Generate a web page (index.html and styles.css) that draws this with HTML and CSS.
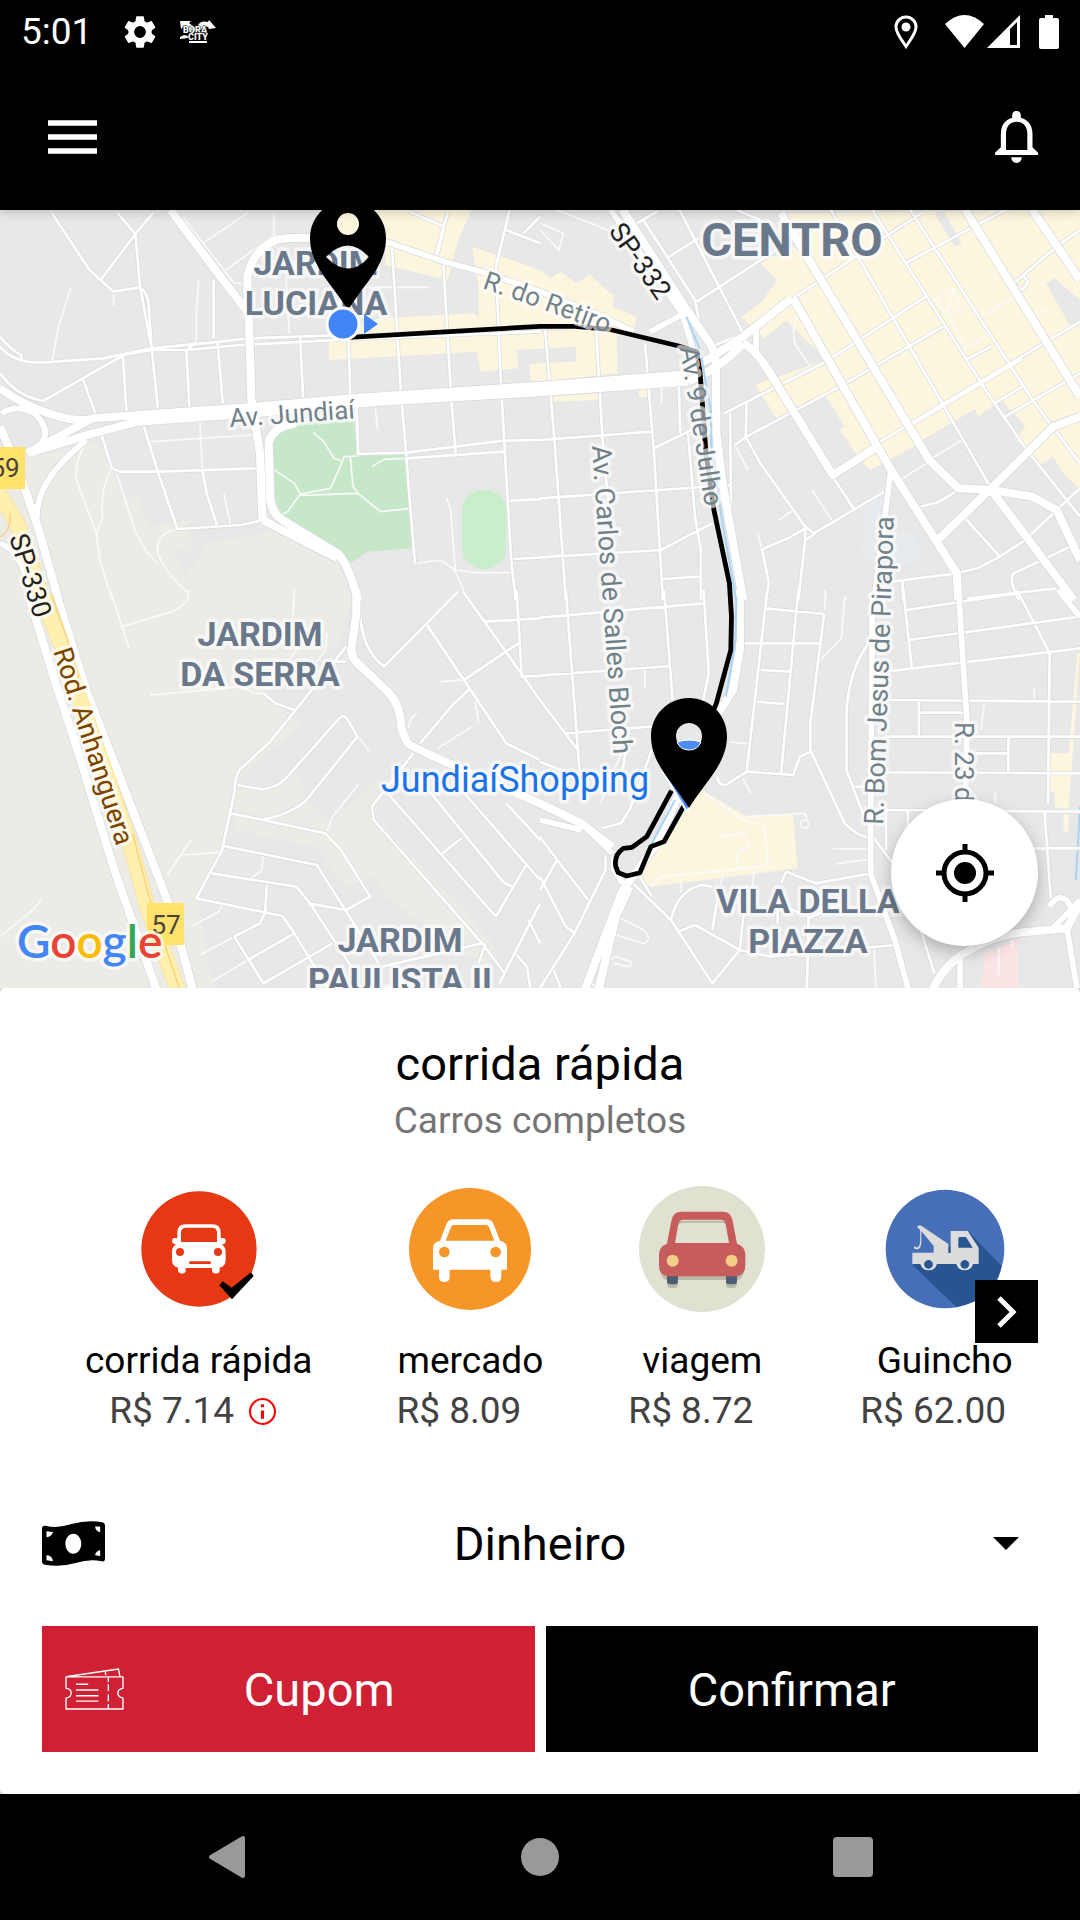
FILE: index.html
```html
<!DOCTYPE html>
<html lang="pt-BR">
<head>
<meta charset="utf-8">
<meta name="viewport" content="width=device-width, initial-scale=1">
<title>Bora City</title>
<link rel="stylesheet" href="styles.css">
</head>
<body>
<div class="app">
  <header class="header">
    <div class="status">
      <span class="clock">5:01</span>
      <svg class="gear" width="32" height="34" viewBox="2.2 2 19.6 20"><path fill="#fff" d="M19.14 12.94c.04-.3.06-.61.06-.94s-.02-.64-.07-.94l2.03-1.58a.5.5 0 0 0 .12-.61l-1.92-3.32a.49.49 0 0 0-.59-.22l-2.39.96a7 7 0 0 0-1.62-.94l-.36-2.54a.48.48 0 0 0-.48-.41h-3.84a.47.47 0 0 0-.47.41l-.36 2.54c-.59.24-1.13.57-1.62.94l-2.39-.96a.48.48 0 0 0-.59.22L2.74 8.87a.47.47 0 0 0 .12.61l2.03 1.58a7 7 0 0 0 0 1.88l-2.03 1.58a.5.5 0 0 0-.12.61l1.92 3.32c.12.22.37.29.59.22l2.39-.96c.5.38 1.03.7 1.62.94l.36 2.54c.05.24.24.41.48.41h3.84c.24 0 .44-.17.47-.41l.36-2.54a6.600 6.600 0 0 0 1.62-.94l2.39.96c.22.08.47 0 .59-.22l1.92-3.32a.47.47 0 0 0-.12-.61zM12 15.600a3.600 3.600 0 1 1 0-7.200 3.600 3.600 0 0 1 0 7.200z"/></svg>
      <svg class="brand" width="36" height="24" viewBox="0 0 36 24"><path fill="#fff" d="M0 1l11 0-2 2 10 7-1-5q3-5 10-3l1-2 7 8-7 1-1-2q-5-2-7 3l-12 1L4 6l-3 3zM0 17l4-2 4 1v2l-8 1zM9 21h18v2H9z"/><text x="3" y="13" class="brand-text">BORA</text><text x="8" y="20" class="brand-text">CITY</text></svg>
      <span class="spacer"></span>
      <svg class="loc" width="24" height="34" viewBox="0 0 24 34"><path fill="none" stroke="#fff" stroke-width="3" d="M12 31.500C7 24 2 18 2 12a10 10 0 0 1 20 0c0 6-5 12-10 19.500z"/><circle cx="12" cy="12" r="4.500" fill="#fff"/></svg>
      <svg class="wifi" width="39" height="34" viewBox="0 0 39 34"><path fill="#fff" d="M0 9Q19.500-9 39 9L19.500 33z"/></svg>
      <svg class="signal" width="33" height="34" viewBox="0 0 33 34"><path fill="#fff" fill-rule="evenodd" d="M33 0v33H0zM23 14v16h7V7z"/></svg>
      <svg class="battery" width="20" height="34" viewBox="0 0 20 34"><path fill="#fff" d="M6 0h8v3h4q2 0 2 2v27q0 2-2 2H2q-2 0-2-2V5q0-2 2-2h4z"/></svg>
    </div>
    <div class="toolbar">
      <button class="bare" aria-label="Menu"><svg width="49" height="34" viewBox="0 0 49 34"><path stroke="#fff" stroke-width="5.500" d="M0 3h49M0 17h49M0 31h49"/></svg></button>
      <button class="bare" aria-label="Notificações"><svg width="43" height="52" viewBox="1321 333 125 156" preserveAspectRatio="none"><path fill="#fff" fill-rule="evenodd" d="M1371 353v-8a12 12 0 0 1 25 0v8q34 10 34 50v39l16 16v7h-125v-7l17-16v-39q0-40 33-50zM1353 450h62v-47q0-36-31-38-31 2-31 38zM1368 472h31q-2 17-15 17-14 0-16-17z"/></svg></button>
    </div>
  </header>

  <main class="main">
    <section class="map" aria-label="Mapa">
      <svg class="map-canvas" viewBox="0 210 1080 778" preserveAspectRatio="xMidYMid slice">
        <defs>
          <g id="thin">
            <path d="M205 265L170 380 152 480M577 240L570 340 570 420M795 38V105L650 215M720 38L590 130M530 50L680 250H720M910 697L940 725 970 775 990 782M790 805L855 850 872 882 960 865 1000 770 1040 768M872 882L835 935 815 945M872 886L1040 880 1105 935 1190 925M1017 770L1025 860 1040 880M1080 800L1115 778 1180 775M250 725Q210 800 225 850L280 1000 290 1080 325 1200M515 987Q450 1000 458 1060 480 1120 548 1180M340 825L395 1000Q430 1070 458 1090M325 805Q290 860 298 950L280 1000M580 660L588 810M435 725L740 705M460 820L590 810M1297 895L1308 925 1322 1110M1205 1090L1280 1080 1320 1110 1380 1118H1495M1320 1110L1350 1180M1020 262L1245 262M830 230L840 400M330 275V318M650 880L670 975M1090 625L1097 692"/>
            <g transform="translate(1568)"><path d="M565 735L605 810M790 870L850 965M745 350Q730 390 740 430L790 510M1130 780L1225 720M1030 850L1130 785M1145 300L1200 265 1222 325 1185 345zM1185 345L1235 445 1300 405M1280 350L1380 290M1435 350L1480 320M1200 265L1180 345M632 1000L645 1050M695 960L735 930M0 90L55 150 68 100 0 70M50 30L210 95M353 550V612M830 1180V1200M888 1190V1200"/></g>
            <g transform="translate(0 1170)"><path d="M435 305L440 315 700 290 740 310 765 310M320 0L375 175M355 110L500 65Q560 35 545 0M855 0L850 80M485 855L555 750M525 795L640 787M0 1040L95 960 120 930M1040 585L965 680 950 725M580 1095L680 1040M615 1175L720 1110M765 795L760 840 730 865M1270 475L1370 410M1280 275L1355 268M1375 300L1390 400M555 1010L635 965 650 940M865 175L835 215M950 130L945 180 920 215M1038 440L1078 488M1185 415L1195 385 1210 368"/></g>
            <g transform="translate(1568 1170)"><path d="M885 20L875 145 810 215M828 0V60M850 777H955M857 822L955 808M320 890L350 860 640 830Q665 825 662 800L650 705 590 690 480 610M520 740L590 730 607 770 573 790V835M600 680L770 670 775 690M235 985L300 1020Q330 1050 300 1060L220 1035M410 860V910M530 850L525 885M622 845L617 885M305 235V295M1290 340L1280 420M1435 290V330M590 565L612 610M200 1110L220 1100 265 1115 260 1130 215 1120M1322 610V640M970 1075L975 1194M550 455L605 462M1370 1050V1075M1332 1070V1155M240 480L175 640"/><circle cx="768" cy="702" r="12"/></g>
          </g>
          <g id="minor">
            <path d="M0 440Q40 490 120 488L300 475 440 445 640 425 720 415 1000 405M0 410Q30 450 62 465V480M0 520Q50 590 125 603L240 535 360 465 440 450 545 450 700 435 1010 418 1568 395M150 38L260 210 330 275 405 262Q430 275 432 320L440 440 458 625M445 38L393 102 340 38M393 102L290 243M393 102L407 262 437 430M240 535L277 640M357 470L367 632M541 450L551 640M632 430L647 610M545 450L570 425M620 240V415M872 415L880 595M1012 415L1017 590M1138 140L1165 590 1180 770M1287 185L1310 590 1323 760M1440 200L1455 560 1465 740 1485 1090 1498 1200M1480 30L1440 200M1300 38L1265 165M1190 35L1290 80 1270 165M1568 50L1520 100M1470 90L1568 130M1035 600L1040 762 1180 758 1465 722 1568 720M1180 775L1465 755M1180 775L1205 1090M418 680L430 720 460 820 515 987 700 975 765 960M295 705L325 805 350 815H460L745 805M588 810L600 880 630 975M1480 902L1568 898M1490 1077L1568 1073"/>
            <g transform="translate(1568)"><path d="M845 30L1310 865M965 30L1300 580 1410 745 1568 950M1075 30L1430 600 1568 790M735 295L1010 105 1110 38M1060 190L1350 30M535 640L830 485 1120 290M600 710L870 560 1170 380M980 730L1350 500 1568 365M1070 680L1290 545 1400 478M1235 480L1310 440M1350 650L1568 520M1320 610L1400 560M1375 250L1500 140 1568 90M1375 250L1400 270 1418 245 1405 230M405 30L590 400M300 60L450 300 470 410M455 305L700 140M375 170L460 115M280 70L340 35M510 435L590 400M0 720L325 695M0 895L555 855M0 1072L350 1050 500 970M330 745L440 690M357 1137L465 1130M15 390L42 720 75 1200M163 390L183 740 200 930M305 430L330 745 357 1200M403 550L407 700M430 700L450 950 467 1050V1200M552 640L555 980M565 735L600 710M600 610L597 710 640 790 770 980 795 1000 1000 875M640 1050L720 1015 770 985M770 985V1020L750 1200M770 1020L800 1000M645 1050L665 1150 655 1200M850 830L910 925M1105 920L1160 905 1215 870M1235 955L1335 1070 1410 1020 1500 930 1568 865M1020 1145L1210 1120 1270 1105 1335 1070M1052 1145L1055 1200M1540 1040L1375 1120Q1360 1140 1390 1200M1240 1195L1500 1165M570 30L640 60"/></g>
            <g transform="translate(0 1170)"><path d="M690 585L760 598Q800 595 830 565L985 385Q1000 370 1010 390L1038 440 890 630Q860 660 800 680L760 690M975 215H1005M1005 170L855 365 780 460 695 540Q680 570 682 600L645 780 570 925M670 670L945 730 990 780 1075 920 1005 960 895 940M650 768L920 825 1100 1120M615 850L860 890 900 940 1020 1130M570 925L820 978 855 1030 950 1194M775 885L770 965 755 1000 680 1040 765 1180 965 1060M720 1110L855 1030M765 310L800 340 855 360M1045 65Q1050 180 1115 230L1330 5M1240 105L1470 460 1568 510M1345 5L1568 330M1220 460L1310 350 1365 295M1350 268L1505 160M1410 95L1568 85M1500 0L1515 260 1568 258M1200 490L1110 610 1080 650 1085 690 1400 1060 1465 1150M1130 615L1440 980M1200 545L1465 880 1490 890M1285 790L1340 745M1340 600L1568 870M1470 640L1568 750M1530 820L1440 980M1568 940L1450 1180M1535 990L1568 1060M1410 1060L1390 1120M1500 1095L1530 1130 1540 1194M1110 1130L1400 1060"/></g>
            <g transform="translate(1568 1170)"><path d="M75 0L110 480 115 540M360 0L385 330M475 0L490 250 470 350M0 83L475 40M0 257L380 228M70 430L380 405M0 330L110 480M0 515L60 540M325 480L260 660 235 700 180 715M250 480L240 540M660 0L600 545 540 585Q515 585 515 560M750 0L700 550M825 70L785 400V480L885 700Q920 740 968 745M655 55L825 72M590 160H640L810 160M640 240L725 245M630 335L710 342M600 545L735 555 755 500 785 485M955 160Q900 230 890 360V540L930 650 965 740M915 590H960M1055 0L1080 240M1065 60L1385 10M1070 150L1568 80M1005 245L1568 175M1385 0L1480 190 1475 640M1000 330L1568 335M1000 440H1568M1000 547L1568 550M1000 660L1568 665M1100 335V435M1100 368H1240M1360 440V545M1265 490H1360M1005 665V780M1068 660V720M1465 665L1485 950M1430 775H1568M970 745L1060 870 1145 1150M270 880L380 990 500 1180 580 1080 600 885M380 990Q400 900 470 885L500 890M700 880L715 845 800 880 960 850M400 1025L450 1005 580 1080 670 1100 1030 1065M500 1020L520 900M780 980L775 1194M780 980L690 940V1000M780 985L880 940M0 740L50 810 140 930M190 800V840L100 1030 0 1194M50 810L0 900M100 1030L75 1010 0 860M40 1140L60 1194M140 1175L170 1194M150 710L190 780M290 860L325 920"/></g>
          </g>
          <g id="medium">
            <path d="M250 720Q120 830 110 920L105 960M5 640Q50 610 100 640 150 690 120 730L80 760M1120 125L1290 185 1400 215 1568 275 1728 340 1840 395M0 1030Q60 1050 90 1180"/>
            <g transform="translate(1568)"><path d="M1020 800L1000 960 970 1200M320 395L410 345M1155 1020L1310 865M628 380V470M205 30L415 345 450 470 460 500"/></g>
            <g transform="translate(1568 1170)"><path d="M965 10L960 700V850L1030 1050 1070 1200M1215 0L1240 400 1235 640M1220 1090V1200M1530 1015L1560 1200M1568 930L1480 1025M1480 950Q1500 910 1530 930L1550 970M1505 0L1568 80M120 700L210 790M215 800V840L240 880M0 690L120 720"/></g>
          </g>
          <g id="major">
            <path d="M495 30L640 230 722 340 730 600 755 760 762 960M722 340L718 230Q735 150 800 120 850 110 920 115L1120 120M0 565Q60 610 140 640T270 655L740 620 1020 595 1568 557 1968 525M80 760L270 700 400 665 740 640 1100 605 1568 577 1998 545M80 760L260 660M0 680L50 800 110 980 170 1200M860 670Q790 680 780 730L785 900Q790 940 820 960L980 1060Q1010 1090 1040 1200M765 960L790 975 980 1075"/>
            <g transform="translate(1568)"><path d="M240 30L420 320 500 440 510 480 512 700 530 850 590 1200M700 40L1060 660 1130 780 1215 865 1310 870 1430 890 1500 930 1568 1080M735 295L980 740 1020 810 1210 1120 1215 1200M1235 30L1568 590M1430 30L1568 240M730 295L590 410 500 470 400 530M430 545Q530 500 590 430M590 430Q630 450 680 540L850 825 980 740M1568 650L1490 680 1310 865 1155 1020M1310 870L1550 1200"/></g>
            <g transform="translate(0 1170)"><path d="M1035 10V70L1020 180Q1020 210 1060 240L1130 310Q1160 340 1165 410 1175 450 1190 465L1260 500 1568 640 1688 700 1778 770M160 0L175 50 250 300 400 700 500 970 560 1200M78 0L168 300 225 480 335 850 455 1200"/></g>
            <g transform="translate(1568 1170)"><path d="M580 0V180L560 300 500 400 400 620 340 760 240 900 130 1200M260 890L220 980 170 1200M1140 1200Q1170 1130 1230 1090 1330 1030 1420 1025L1530 1015 1568 940"/></g>
          </g>
          <path id="retiro" d="M482 288Q540 308 612 335"/>
        </defs>
        <rect y="210" width="1080" height="778" fill="#e8e8e8"/>
        <g class="ground" transform="translate(0 200) scale(.34439 .33333)">
          <path fill="#ecebe6" d="M0 860L80 775 250 730 290 730 330 820 350 900 400 880 430 980 550 960 560 1060 500 1040 540 1130 600 1030 770 1000 820 960 980 1080 1020 1200 985 1330 760 1480 880 1570 790 1650 700 1730 650 1950 570 2080 620 2364H0zM690 1740L780 1770 860 1700 890 1800 960 1870 1100 1730 1090 1850 1450 2250 1400 2300 1120 2090 1090 2030 1000 2060 920 1940 680 1890z"/>
          <path class="shop" d="M905 38L1000 30H1370L1330 120 1300 240 1120 195V110L1060 30zM1370 140L1568 210 1598 235 1628 215 1673 250 1713 225 1783 290 1778 320 1848 350 1838 410 1568 380 1390 385V260zM1100 355L1380 340 1420 400H1000zM955 420L1790 385 1793 520 1568 545 1540 540 1538 495 1568 490 1673 485V440L1500 450 1505 505 1395 515 1385 455 955 480zM1606 590L1735 580V600L1606 605zM1855 565H1880V590H1855z"/>
          <g transform="translate(1568)"><path class="shop" d="M700 40L1568 30V870L1520 820 1490 770 1450 795 1380 715 1410 680 1340 600 1270 650 1265 625 1200 665 1110 720 1085 740 960 810 930 780 870 690 885 680 830 590 780 600 690 660 625 555 830 480 715 360 650 415 585 350 640 310 690 240 640 190 760 130z"/><path fill="#e8e8e8" d="M1145 40L1170 30 1225 130 1205 140zM640 430L720 395 760 450 680 510zM1470 250L1495 235 1568 300V370L1540 380z"/><path fill="#e7ebee" d="M950 890L1000 860V1000L1090 995 1102 1085 1040 1100 930 1070z"/></g>
          <g transform="translate(1568 1170)"><path class="shop" d="M470 600L600 680 735 672 748 835 320 890 290 865 400 670zM1560 190H1568L1535 655H1495V605H1475V490H1535zM1520 670H1535V725H1520z"/><path fill="#fce4e4" d="M1290 1090L1388 1050V1200H1280z"/><path class="river" d="M1568 650L1556 870"/></g>
          <path fill="#c6e7c8" d="M790 700L860 670 1025 660 1040 760 1180 765 1195 1045 1065 1055 1020 1088 820 950 800 900z"/>
          <rect x="1342" y="870" width="127" height="236" rx="60" fill="#caedcb"/>
          <use href="#thin" class="thin"/>
          <use href="#minor" class="minor-case"/><use href="#minor" class="minor"/>
          <use href="#medium" class="medium-case"/><use href="#major" class="major-case"/>
          <use href="#medium" class="medium"/><use href="#major" class="major"/>
          <path class="highway-case" d="M-10 870L50 970 105 1140 190 1370 280 1640 380 1940 430 2130 520 2380"/>
          <path class="highway" d="M-10 870L50 970 105 1140 190 1370 280 1640 380 1940 430 2130 520 2380"/>
          <path class="highway-line" d="M385 1900L430 2080 520 2364M150 1180L200 1330 240 1480M0 1010Q30 1000 30 940"/>
          <path class="river" d="M1993 350L2033 450 2048 540 2065 640V740L2098 970 2138 1200 2136 1320 2108 1490M1960 1800L1888 1940"/>
          <path class="route" d="M1015 412L1568 379H1670L1768 388 1968 437 2023 455 2033 520 2050 760 2073 930 2118 1150 2124 1250 2122 1350 2080 1510 2060 1560M1950 1772L1878 1910 1835 1942 1810 1945Q1782 1965 1788 2000L1795 2018 1820 2028 1858 2018 1890 1940 1928 1925 1990 1810"/>
        </g>
        <g class="area">
          <text x="316" y="275">JARDIM</text><text x="316" y="315">LUCIANA</text>
          <text x="260" y="646">JARDIM</text><text x="260" y="686">DA SERRA</text>
          <text x="400" y="952">JARDIM</text><text x="400" y="992">PAULISTA II</text>
          <text x="808" y="913">VILA DELLA</text><text x="808" y="953">PIAZZA</text>
          <text x="792" y="256" class="city">CENTRO</text>
        </g>
        <g class="street">
          <text transform="translate(230 427) rotate(-4)">Av. Jundiaí</text>
          <text><textPath href="#retiro">R. do Retiro</textPath></text>
          <text transform="translate(680 348) rotate(81)">Av. 9 de Julho</text>
          <text transform="translate(592 446) rotate(86)" class="long">Av. Carlos de Salles Bloch</text>
          <text transform="translate(883 825) rotate(-88)" class="long">R. Bom Jesus de Pirapora</text>
          <text transform="translate(955 722) rotate(90)">R. 23 d</text>
        </g>
        <g class="road-name">
          <text transform="translate(608 231) rotate(55)">SP-332</text>
          <text transform="translate(9 537) rotate(73)">SP-330</text>
          <text transform="translate(53 651) rotate(72)" class="rodovia">Rod. Anhanguera</text>
        </g>
        <path fill="#ffe16b" d="M0 447h25v42H0zM147 903h37v42h-37z"/>
        <g class="shield"><text x="5" y="477">59</text><text x="166" y="934">57</text></g>
        <text x="381" y="792" class="poi">JundiaíShopping</text>
        <text x="17" y="958" class="google"><tspan fill="#4285f4">G</tspan><tspan fill="#ea4335">o</tspan><tspan fill="#fbbc05">o</tspan><tspan fill="#4285f4">g</tspan><tspan fill="#34a853">l</tspan><tspan fill="#ea4335">e</tspan></text>
        <path fill="#4e8cf5" stroke="#fff" stroke-width="2" d="M662 770L687 812 692 800 675 742z"/>
        <path fill-rule="evenodd" d="M689 698c-21 0-38 17-38 38 0 28 22 46 38 72 16-26 38-44 38-72 0-21-17-38-38-38zM689 723a13 13 0 1 1 0 26 13 13 0 0 1 0-26z"/>
        <path fill="#4e8cf5" stroke="#fff" d="M677 742q12-4 24 0a13 13 0 0 1-24 0z"/>
        <circle cx="348" cy="224" r="12" fill="#fdf6df"/>
        <path fill-rule="evenodd" d="M348 200c-21 0-38 17-38 38 0 28 22 46 38 72 16-26 38-44 38-72 0-21-17-38-38-38zM348 213a11 11 0 1 1 0 22 11 11 0 0 1 0-22zM326 257q22-23 43 0-20 23-43 0z"/>
        <circle cx="343" cy="324" r="16" fill="#4285f4" stroke="#fff" stroke-width="3"/>
        <path fill="#4285f4" d="M364 314l14 10-14 10z"/>
      </svg>
      <button class="locate" aria-label="Minha localização"><svg width="58" height="58" viewBox="0 0 58 58"><circle cx="29" cy="29" r="21" fill="none" stroke="#000" stroke-width="5"/><circle cx="29" cy="29" r="11"/><path stroke="#000" stroke-width="5" d="M29 0v7M29 51v7M0 29h7M51 29h7"/></svg></button>
    </section>

    <section class="sheet">
      <h1 class="title">corrida rápida</h1>
      <p class="subtitle">Carros completos</p>
      <div class="rides">
        <div class="ride-list">
          <button class="ride" aria-pressed="true">
            <svg class="ride-icon" viewBox="228 498 378 378"><circle cx="417" cy="687" r="173" fill="#e63812"/><path fill="#fff" fill-rule="evenodd" d="M352 655v-17q0-25 25-25h80q25 0 25 25v17q14-4 15 6 1 12-12 12 12 8 12 22v24q0 20-18 24v8q0 10-11 10t-12-10v-7h-79v7q0 10-11 10t-12-10v-8q-18-4-18-24v-24q0-14 12-22-12 0-12-12 2-10 16-6zM363 666h108v-28q0-15-15-15h-78q-15 0-15 15z"/><g fill="#e63812"><circle cx="360" cy="696" r="12"/><circle cx="474" cy="696" r="12"/><rect x="387" y="724" width="66" height="8" rx="4"/></g><path d="M488 784l27 19 58-46 8 11-65 70-38-42z"/></svg>
            <span class="ride-name">corrida rápida</span>
            <span class="ride-price">R$ 7.14<svg class="info" width="27" height="27" viewBox="0 0 26 26"><circle cx="13" cy="13" r="12" fill="none" stroke="red" stroke-width="2"/><path stroke="red" stroke-width="3" d="M13 6v3M13 12v8"/></svg></span>
          </button>
          <button class="ride">
            <svg class="ride-icon" viewBox="1044 498 378 378"><circle cx="1233" cy="687" r="183" fill="#f69528"/><path fill="#fff" fill-rule="evenodd" d="M1143 662l19-49q6-15 22-15h98q16 0 22 15l19 49q21 4 21 22v65h-17v21q0 16-16 16t-17-16v-21h-122v21q0 16-16 16t-16-16v-21h-18v-65q0-18 21-22zM1160 662h146l-16-40q-2-7-9-7h-96q-7 0-9 7z"/><circle cx="1156" cy="696" r="16" fill="#f69528"/><circle cx="1310" cy="696" r="16" fill="#f69528"/></svg>
            <span class="ride-name">mercado</span>
            <span class="ride-price">R$ 8.09</span>
          </button>
          <button class="ride">
            <svg class="ride-icon" viewBox="240 498 378 378"><circle cx="429" cy="687" r="189" fill="#e0e1d1"/><path fill="#b9b9ab" d="M352 602h156v20q-8-14-22-14H374q-14 0-22 14zM301 745h257q-8 35-24 35v12q0 12-12 12h-10q-11 0-11-12v-12H357v12q0 12-11 12h-10q-12 0-12-12v-12q-16 0-23-35z"/><path fill="#4f5d73" d="M324 765h33v18q0 10-10 10h-13q-10 0-10-10zM501 765h33v18q0 10-10 10h-13q-10 0-10-10z"/><path fill="#c75c5c" fill-rule="evenodd" d="M324 671l13-68q5-28 30-28h124q25 0 30 28l13 68q25 8 25 34v30q0 34-34 34H334q-34 0-34-34v-30q0-26 24-34zM348 669h162l-10-57q-2-13-15-13H373q-13 0-15 13z"/><circle cx="341" cy="722" r="18" fill="#f5cf87"/><circle cx="518" cy="722" r="18" fill="#f5cf87"/></svg>
            <span class="ride-name">viagem</span>
            <span class="ride-price">R$ 8.72</span>
          </button>
          <button class="ride">
            <svg class="ride-icon" viewBox="969 498 378 378"><circle cx="1158" cy="687" r="178" fill="#476fb7"/><path fill="#285491" d="M1226 633L1328 738Q1310 840 1192 861L1060 735 1150 700z"/><path fill="#dcdcdd" fill-rule="evenodd" d="M1074 620q6-8 14-2l80 54v27h7v-66h51l33 50v49h-17a26 26 0 0 1-50 0h-58a26 26 0 0 1-50 0h-24v-34h64v-20l-37-45v35q-2 22-16 20-10-2-4-10 8 10 14-2 4-10 2-46zM1198 651v32h43l-20-32zM1108 720a13 13 0 1 0 1 0zM1217 720a13 13 0 1 0 1 0z"/></svg>
            <span class="ride-name">Guincho</span>
            <span class="ride-price">R$ 62.00</span>
          </button>
        </div>
        <button class="next" aria-label="Próximo"><svg width="20" height="32" viewBox="0 0 20 32"><path fill="none" stroke="#fff" stroke-width="5" d="M2 2l14 14L2 30"/></svg></button>
      </div>
      <div class="payment">
        <svg class="money" width="63" height="45" viewBox="122 90 183 131" preserveAspectRatio="none"><path fill-rule="evenodd" d="M122 112q0-9 10-8 35 9 75-5 50-13 90-5 8 2 8 10v96q0 10-10 7-35-7-75 5-45 13-90 5-8-2-8-8zM213 127c-13 0-23 13-23 29s10 29 23 29 23-13 23-29-10-29-23-29zM135 120v17q15 0 19-15zM276 106q2 13 15 17v-17zM135 190v14l19 3q-3-17-19-17zM291 175q-13 2-15 15l15 2z"/></svg>
        <select class="method" aria-label="Forma de pagamento"><option>Dinheiro</option></select>
        <svg class="caret" width="26" height="13" viewBox="0 0 26 13"><path d="M0 0h26L13 13z"/></svg>
      </div>
      <div class="actions">
        <button class="action coupon"><svg width="59" height="42" viewBox="188 537 173 124" preserveAspectRatio="none"><path fill="none" stroke="#fff" stroke-width="4" stroke-linejoin="round" d="M191 563h167v34q-15 2-15 14t15 15v32H191v-32q15-2 15-15t-15-14zM195 562l150-22 4 22M305 546l3 12M315 566v12M315 585v20M315 615v20M315 643v14M220 585h36M220 602h66M220 619h66M220 635h66"/></svg><span class="coupon-label">Cupom</span></button>
        <button class="action confirm">Confirmar</button>
      </div>
    </section>
  </main>

  <nav class="navbar">
    <button class="bare" aria-label="Voltar"><svg width="40" height="44" viewBox="0 0 40 44"><path fill="#999" stroke="#999" stroke-width="4" stroke-linejoin="round" d="M36 3v38L4 22z"/></svg></button>
    <button class="bare" aria-label="Início"><svg width="40" height="40" viewBox="0 0 40 40"><circle cx="20" cy="20" r="19" fill="#999"/></svg></button>
    <button class="bare" aria-label="Recentes"><svg width="40" height="40" viewBox="0 0 40 40"><rect width="40" height="40" rx="4" fill="#999"/></svg></button>
  </nav>
</div>
</body>
</html>
```
FILE: styles.css
```css
* { box-sizing: border-box; }

body {
  margin: 0;
  font-family: Roboto, "Liberation Sans", sans-serif;
  color: #000;
}

button, select { font: inherit; color: inherit; border: 0; padding: 0; margin: 0; }
svg { display: block; flex: none; }

.app { display: flex; flex-direction: column; min-height: 100vh; }
.bare { background: none; }

/* Header */
.header { position: relative; z-index: 1; background: #000; color: #fff; box-shadow: 0 2px 10px rgba(0, 0, 0, .2); }
.status { display: flex; align-items: center; height: 63px; padding: 0 21px; }
.clock { font-size: 37px; line-height: 44px; }
.gear { margin-left: 32px; }
.brand { margin-left: 24px; }
.brand-text { font-size: 9px; font-weight: 900; fill: #fff; stroke: #000; stroke-width: 1px; paint-order: stroke; }
.spacer { flex: 1; }
.wifi { margin-left: 27px; }
.signal { margin-left: 3px; }
.battery { margin-left: 19px; }
.toolbar { display: flex; align-items: center; justify-content: space-between; height: 147px; padding: 0 42px 0 48px; }

/* Map */
.main { flex: 1; display: flex; flex-direction: column; background: #d8d8d8; }
.map { position: relative; flex: 1; min-height: 400px; overflow: hidden; }
.map-canvas { position: absolute; inset: 0; width: 100%; height: 100%; }
.ground use, .river, .route, .highway, .highway-case, .highway-line { fill: none; stroke-linejoin: round; }
.shop { fill: #fdf6df; }
.thin { stroke: #fafafa; stroke-width: 5px; }
.minor-case { stroke: #d9dadf; stroke-width: 12px; }
.minor { stroke: #fff; stroke-width: 8px; }
.medium-case { stroke: #d6d7dd; stroke-width: 21px; }
.medium { stroke: #fff; stroke-width: 17px; }
.major-case { stroke: #d6d7dd; stroke-width: 28px; }
.major { stroke: #fff; stroke-width: 24px; }
.highway-case { stroke: #fbdf8c; stroke-width: 46px; }
.highway { stroke: #fff0af; stroke-width: 42px; }
.highway-line { stroke: #f5d27a; stroke-width: 4px; }
.river { stroke: #a9d5f5; stroke-width: 6px; }
.route { stroke: #000; stroke-width: 14px; }

.map-canvas text { paint-order: stroke; stroke: rgba(255, 255, 255, .65); stroke-width: 7px; stroke-linejoin: round; }
.area { font-size: 34px; font-weight: 700; fill: #69788a; text-anchor: middle; }
.city { font-size: 47px; }
.street { font-size: 26px; fill: #71818a; }
.road-name, .long { font-size: 27px; }
.road-name { fill: #222; }
.rodovia { fill: #7a4300; }
.map-canvas .shield text { font-size: 26px; fill: #46443a; text-anchor: middle; stroke: none; }
.poi { font-size: 36px; fill: #1a73e8; }
.google { font-family: Lato, Roboto, sans-serif; font-size: 46px; font-weight: 600; }

.locate {
  position: absolute; right: 42px; bottom: 42px;
  display: grid; place-items: center;
  width: 147px; height: 147px; border-radius: 50%;
  background: #fff; box-shadow: 0 6px 16px rgba(0, 0, 0, .25);
}

/* Ride sheet */
.sheet { padding: 48px 0 42px; border-radius: 5px; background: #fff; }
.title { margin: 0; font-size: 47px; line-height: 56px; font-weight: 400; text-align: center; }
.subtitle { margin: 4px 0 40px; font-size: 37px; line-height: 50px; text-align: center; color: #757575; }
.rides { position: relative; }
.ride-list { display: flex; padding: 0 43px; overflow: hidden; }
.ride { flex: none; display: flex; flex-direction: column; align-items: center; padding: 0 42px; background: none; font-size: 37px; line-height: 50px; }
.ride-icon { width: 126px; height: 126px; margin-bottom: 24px; }
.ride-price { display: flex; align-items: center; padding-right: 23px; color: #424242; }
.ride[aria-pressed="true"] .ride-price { padding-right: 12px; }
.info { margin-left: 15px; }
.next { position: absolute; right: 42px; top: 94px; display: grid; place-items: center; width: 63px; height: 63px; background: #000; }

.payment { display: flex; align-items: center; margin: 76px 42px 51px; }
.method { flex: 1; height: 63px; appearance: none; background: none; font-size: 47px; line-height: 63px; text-align: center; text-align-last: center; }
.caret { margin: 0 19px 0 18px; }

.actions { display: grid; grid-template-columns: 1fr 1fr; gap: 11px; margin: 0 42px; }
.action { display: flex; align-items: center; justify-content: center; height: 126px; font-size: 47px; color: #fff; }
.coupon { padding: 0 20px 0 23px; background: #cf2034; }
.coupon-label { flex: 1; text-align: center; }
.confirm { background: #000; }

/* System navigation */
.navbar { display: flex; justify-content: center; height: 126px; background: #000; }
.navbar .bare { display: grid; place-items: center; width: 29%; }
```
